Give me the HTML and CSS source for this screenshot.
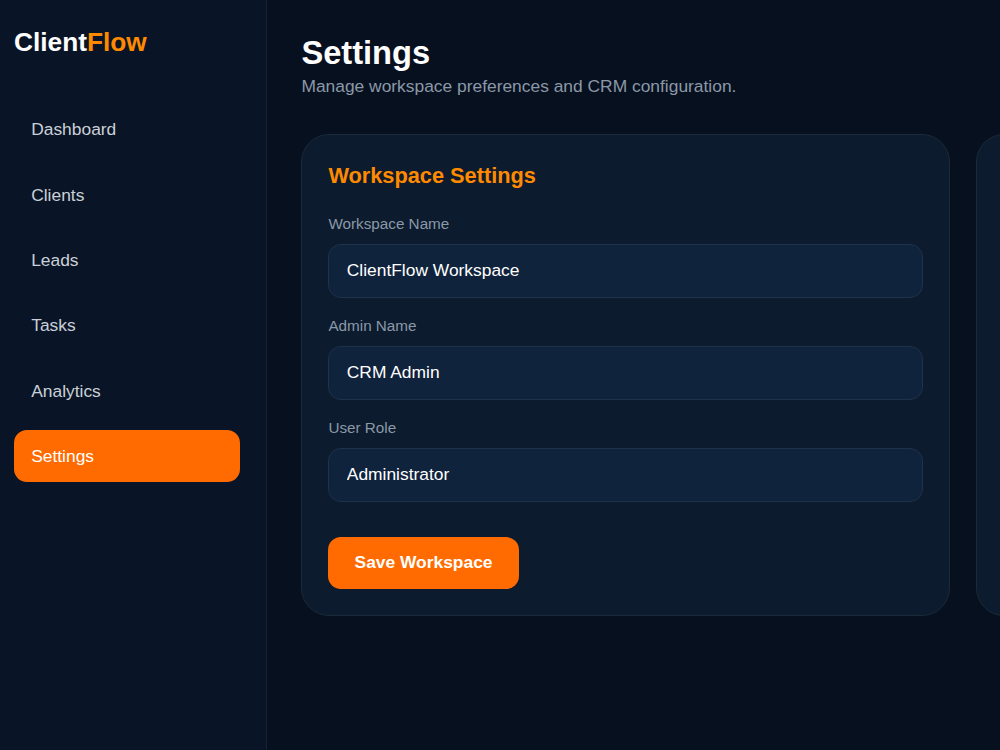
FILE: index.html
```
<!DOCTYPE html>
<html lang="en">
  <head>
    <title>ClientFlow - Settings</title>
    <meta charset="utf-8">
    <meta name="viewport" content="width=device-width, initial-scale=1">
    <link rel="stylesheet" href="styles.css">
  </head>
  <body>
    <div class="app">
      <aside class="sidebar">
        <div class="logo">Client<span>Flow</span></div>
        <nav class="menu">
          <a href="#">Dashboard</a>
          <a href="#">Clients</a>
          <a href="#">Leads</a>
          <a href="#">Tasks</a>
          <a href="#">Analytics</a>
          <a href="#" class="active">Settings</a>
        </nav>
      </aside>

      <main class="main">
        <header class="topbar">
          <h1>Settings</h1>
          <p>Manage workspace preferences and CRM configuration.</p>
        </header>

        <div class="settings-grid">
          <section class="card">
            <h2>Workspace Settings</h2>

            <label for="workspace">Workspace Name</label>
            <input type="text" id="workspace" value="ClientFlow Workspace">

            <label for="admin">Admin Name</label>
            <input type="text" id="admin" value="CRM Admin">

            <label for="role">User Role</label>
            <input type="text" id="role" value="Administrator">

            <button class="save-btn">Save Workspace</button>
          </section>

          <section class="card"></section>
        </div>
      </main>
    </div>
  </body>
</html>
```
FILE: styles.css
```
* {
  margin: 0;
  padding: 0;
  box-sizing: border-box;
}

body {
  font-family: Arial, "Liberation Sans", sans-serif;
  font-size: 17.4px;
  background: #07101e;
  color: white;
  overflow: hidden;
}

.app {
  display: flex;
  height: 100vh;
}

/* sidebar */
.sidebar {
  flex: none;
  width: 267px;
  padding: 26px 26.5px 26px 14px;
  background: #091526;
  border-right: 1px solid #172130;
}

.logo {
  font-size: 26.25px;
  font-weight: bold;
  line-height: 32px;
  margin-bottom: 45.6px;
}
.logo span {
  color: #ff8a00;
}

.menu {
  display: flex;
  flex-direction: column;
  gap: 13.35px;
}
.menu a {
  padding: 15.7px 17.2px 16.3px;
  line-height: 20px;
  border-radius: 13px;
  color: #cbd0d8;
  text-decoration: none;
}
.menu a.active {
  background: #ff6b00;
  color: white;
}

/* content */
.main {
  flex: 1;
  min-width: 0;
  padding: 34px 0 0 34.4px;
  overflow: hidden;
}

.topbar {
  margin-bottom: 38px;
}
.topbar h1 {
  font-size: 32.65px;
  line-height: 37px;
}
.topbar p {
  line-height: 20px;
  margin-top: 5px;
  color: #8b98a8;
}

.settings-grid {
  display: grid;
  grid-template-columns: 649px 649px;
  gap: 26px;
}

.card {
  height: 482px;
  padding: 26px;
  background: #0c1b2d;
  border: 1px solid #1c2939;
  border-radius: 28px;
}
.card h2 {
  font-size: 21.75px;
  line-height: 30px;
  margin-bottom: 24px;
  color: #ff8a00;
}
.card label {
  display: block;
  font-size: 15.25px;
  line-height: 18px;
  margin-bottom: 11px;
  color: #8b98a8;
}
.card input {
  display: block;
  width: 100%;
  height: 54px;
  padding: 0 17.4px 1px;
  margin-bottom: 19px;
  font: inherit;
  color: white;
  background: #0f233c;
  border: 1px solid #20314a;
  border-radius: 13px;
  outline: none;
}

.save-btn {
  height: 52px;
  padding: 0 26.2px 1px;
  margin-top: 16px;
  font: bold 17.4px Arial, "Liberation Sans", sans-serif;
  color: white;
  background: #ff6b00;
  border: none;
  border-radius: 13px;
}
```
